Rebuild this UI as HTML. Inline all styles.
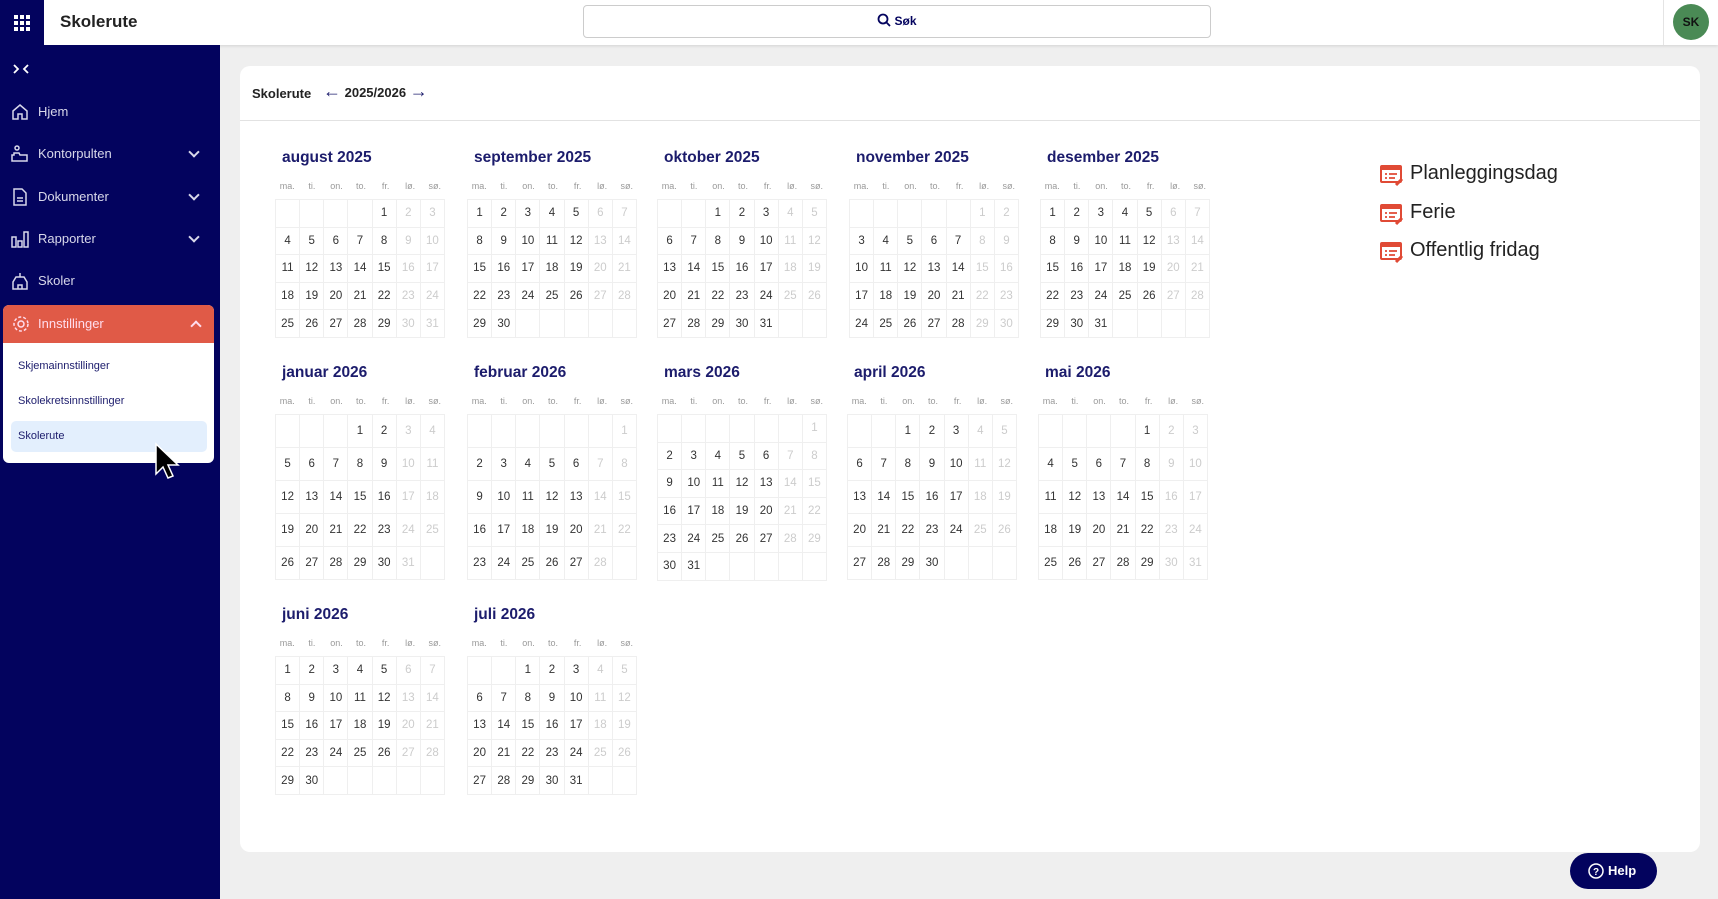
<!DOCTYPE html>
<html><head><meta charset="utf-8"><style>
*{box-sizing:border-box;margin:0;padding:0}
body{width:1718px;height:899px;overflow:hidden;background:#efefef;font-family:"Liberation Sans",sans-serif;position:relative}
.top{position:absolute;left:0;top:0;width:1718px;height:45px;background:#fff;box-shadow:0 1px 3px rgba(0,0,0,.12)}
.sq{position:absolute;left:0;top:0;width:44px;height:45px;background:#03035e}
.side{position:absolute;left:0;top:45px;width:220px;height:854px;background:#03035e;color:#d8d8ea}
.title{position:absolute;left:60px;top:12px;font-size:17px;font-weight:bold;color:#222}
.search{position:absolute;left:583px;top:5px;width:628px;height:33px;border:1px solid #ccc;border-radius:4px;text-align:center;font-size:12px;font-weight:bold;line-height:31px;color:#03035e}
.av{position:absolute;left:1673px;top:4px;width:36px;height:36px;border-radius:50%;background:#4a8a55;color:#111;font-size:12px;font-weight:bold;text-align:center;line-height:36px}
.sep{position:absolute;left:1663px;top:0;width:1px;height:45px;background:#e4e4e4}
.it{position:absolute;left:0;width:220px;height:40px;font-size:13px;line-height:40px;padding-left:38px}
.it svg{position:absolute;left:11px;top:11px}
.chev{position:absolute;left:190px;top:14px;width:8px;height:8px;border-right:2px solid #d8d8ea;border-bottom:2px solid #d8d8ea;transform:rotate(45deg)}
.card{position:absolute;left:240px;top:66px;width:1460px;height:786px;background:#fff;border-radius:10px}
.hdr{position:absolute;left:0;top:0;width:1460px;height:55px;border-bottom:1px solid #e2e2e2}
.mo{position:absolute;width:172px}
.mo h3{font-size:15.5px;color:#1c1c6c;font-weight:bold;margin-left:7px;height:33px;line-height:20px}
.mo .wd{display:flex;font-size:9px;color:#999;height:12px}
.mo .wd span{flex:1;text-align:center}
.mo table{border-collapse:collapse;width:170px;margin-top:6px}
.mo td{border:1px solid #efefef;width:24.3px;text-align:center;font-size:11.5px;color:#333}
.mo td:nth-child(n+6){color:#ccc}
.r1 td{height:27.6px}.r2 td{height:33px}.r2.six td{height:27.6px}
.lg{position:absolute;left:1380px;font-size:20px;color:#222}
.lg svg{position:absolute;left:0;top:3px}
.lg span{position:absolute;left:30px;white-space:nowrap}
.help{position:absolute;left:1570px;top:853px;width:87px;height:36px;border-radius:18px;background:#03035e;color:#fff;font-size:13px;font-weight:bold;line-height:36px;padding-left:38px}
</style></head><body>
<div class="top">
<div class="sq"><svg width="44" height="45" viewBox="0 0 44 45" fill="#fff"><rect x="14" y="15" width="4" height="4"/><rect x="20" y="15" width="4" height="4"/><rect x="26" y="15" width="4" height="4"/><rect x="14" y="21" width="4" height="4"/><rect x="20" y="21" width="4" height="4"/><rect x="26" y="21" width="4" height="4"/><rect x="14" y="27" width="4" height="4"/><rect x="20" y="27" width="4" height="4"/><rect x="26" y="27" width="4" height="4"/></svg></div>
<div class="title">Skolerute</div>
<div class="search"><svg width="14" height="14" viewBox="0 0 14 14" style="vertical-align:-2px;margin-right:3px"><circle cx="6" cy="6" r="4.5" stroke="#03035e" stroke-width="1.8" fill="none"/><path d="M9.3 9.3L13 13" stroke="#03035e" stroke-width="1.8"/></svg>Søk</div>
<div class="sep"></div>
<div class="av">SK</div>
</div>
<div class="side">
<svg style="position:absolute;left:13px;top:19px" width="16" height="10" viewBox="0 0 16 10" fill="none" stroke="#fff" stroke-width="1.8"><path d="M1 1l4 4-4 4M15 1l-4 4 4 4"/></svg>
<div class="it" style="top:47px"><svg width="18" height="18" viewBox="0 0 18 18" fill="none" stroke="#d8d8ea" stroke-width="1.5"><path d="M2 8L9 2l7 6v8H11v-5H7v5H2z"/></svg>Hjem</div>
<div class="it" style="top:89px"><svg width="18" height="18" viewBox="0 0 18 18" fill="none" stroke="#d8d8ea" stroke-width="1.5"><circle cx="6" cy="3" r="2"/><path d="M3 8h5l1 2h7v6H1v-6h2z"/></svg>Kontorpulten<div class="chev"></div></div>
<div class="it" style="top:132px"><svg width="18" height="18" viewBox="0 0 18 18" fill="none" stroke="#d8d8ea" stroke-width="1.5"><path d="M3 1h8l4 4v12H3z M6 10h6M6 13h6"/></svg>Dokumenter<div class="chev"></div></div>
<div class="it" style="top:174px"><svg width="18" height="18" viewBox="0 0 18 18" fill="none" stroke="#d8d8ea" stroke-width="1.5"><path d="M1 7h4v10H1zM7 11h4v6H7zM13 2h4v15h-4z"/></svg>Rapporter<div class="chev"></div></div>
<div class="it" style="top:216px"><svg width="18" height="18" viewBox="0 0 18 18" fill="none" stroke="#d8d8ea" stroke-width="1.5"><path d="M9 1v4M5 5h8l3 5v7H2v-7z M7 17v-4h4v4"/></svg>Skoler</div>
<div style="position:absolute;left:3px;top:260px;width:211px;height:158px;background:#fff;border-radius:6px"></div>
<div class="it" style="top:260px;left:3px;width:211px;height:38px;line-height:38px;background:#e05a47;border-radius:6px 6px 0 0;padding-left:35px;color:#fde"><svg width="18" height="18" viewBox="0 0 18 18" fill="none" stroke="#fde" stroke-width="1.5" style="left:9px;top:10px"><circle cx="9" cy="9" r="3"/><circle cx="9" cy="9" r="7" stroke-dasharray="3 2"/></svg>Innstillinger<div class="chev" style="left:189px;top:17px;transform:rotate(225deg);border-color:#fde"></div></div>
<div style="position:absolute;left:18px;top:315px;font-size:11px;color:#1c1c6c">Skjemainnstillinger</div>
<div style="position:absolute;left:18px;top:350px;font-size:11px;color:#1c1c6c">Skolekretsinnstillinger</div>
<div style="position:absolute;left:11px;top:376px;width:196px;height:31px;background:#e3effd;border-radius:5px;font-size:11px;color:#1c1c6c;padding-left:7px;line-height:31px">Skolerute</div>
<svg style="position:absolute;left:154px;top:397px" width="26" height="40" viewBox="0 0 26 40"><path d="M2 2v30l7-7 5 11 5-2-5-11h10z" fill="#000" stroke="#fff" stroke-width="1.5"/></svg>
</div>
<div class="card">
<div class="hdr"><div style="position:absolute;left:12px;top:20px;font-size:13px;font-weight:bold;color:#222">Skolerute</div>
<div style="position:absolute;left:83px;top:15px;font-size:13px;font-weight:bold;color:#222"><span style="color:#1c1c6c;font-size:18px">←</span> 2025/2026 <span style="color:#1c1c6c;font-size:18px">→</span></div></div>
</div>

<div class="mo" style="left:275px;top:148px"><h3>august 2025</h3><div class="wd"><span>ma.</span><span>ti.</span><span>on.</span><span>to.</span><span>fr.</span><span>lø.</span><span>sø.</span></div><table>
<tr class="r1"><td></td><td></td><td></td><td></td><td>1</td><td>2</td><td>3</td></tr>
<tr class="r1"><td>4</td><td>5</td><td>6</td><td>7</td><td>8</td><td>9</td><td>10</td></tr>
<tr class="r1"><td>11</td><td>12</td><td>13</td><td>14</td><td>15</td><td>16</td><td>17</td></tr>
<tr class="r1"><td>18</td><td>19</td><td>20</td><td>21</td><td>22</td><td>23</td><td>24</td></tr>
<tr class="r1"><td>25</td><td>26</td><td>27</td><td>28</td><td>29</td><td>30</td><td>31</td></tr></table></div>

<div class="mo" style="left:467px;top:148px"><h3>september 2025</h3><div class="wd"><span>ma.</span><span>ti.</span><span>on.</span><span>to.</span><span>fr.</span><span>lø.</span><span>sø.</span></div><table>
<tr class="r1"><td>1</td><td>2</td><td>3</td><td>4</td><td>5</td><td>6</td><td>7</td></tr>
<tr class="r1"><td>8</td><td>9</td><td>10</td><td>11</td><td>12</td><td>13</td><td>14</td></tr>
<tr class="r1"><td>15</td><td>16</td><td>17</td><td>18</td><td>19</td><td>20</td><td>21</td></tr>
<tr class="r1"><td>22</td><td>23</td><td>24</td><td>25</td><td>26</td><td>27</td><td>28</td></tr>
<tr class="r1"><td>29</td><td>30</td><td></td><td></td><td></td><td></td><td></td></tr></table></div>

<div class="mo" style="left:657px;top:148px"><h3>oktober 2025</h3><div class="wd"><span>ma.</span><span>ti.</span><span>on.</span><span>to.</span><span>fr.</span><span>lø.</span><span>sø.</span></div><table>
<tr class="r1"><td></td><td></td><td>1</td><td>2</td><td>3</td><td>4</td><td>5</td></tr>
<tr class="r1"><td>6</td><td>7</td><td>8</td><td>9</td><td>10</td><td>11</td><td>12</td></tr>
<tr class="r1"><td>13</td><td>14</td><td>15</td><td>16</td><td>17</td><td>18</td><td>19</td></tr>
<tr class="r1"><td>20</td><td>21</td><td>22</td><td>23</td><td>24</td><td>25</td><td>26</td></tr>
<tr class="r1"><td>27</td><td>28</td><td>29</td><td>30</td><td>31</td><td></td><td></td></tr></table></div>

<div class="mo" style="left:849px;top:148px"><h3>november 2025</h3><div class="wd"><span>ma.</span><span>ti.</span><span>on.</span><span>to.</span><span>fr.</span><span>lø.</span><span>sø.</span></div><table>
<tr class="r1"><td></td><td></td><td></td><td></td><td></td><td>1</td><td>2</td></tr>
<tr class="r1"><td>3</td><td>4</td><td>5</td><td>6</td><td>7</td><td>8</td><td>9</td></tr>
<tr class="r1"><td>10</td><td>11</td><td>12</td><td>13</td><td>14</td><td>15</td><td>16</td></tr>
<tr class="r1"><td>17</td><td>18</td><td>19</td><td>20</td><td>21</td><td>22</td><td>23</td></tr>
<tr class="r1"><td>24</td><td>25</td><td>26</td><td>27</td><td>28</td><td>29</td><td>30</td></tr></table></div>

<div class="mo" style="left:1040px;top:148px"><h3>desember 2025</h3><div class="wd"><span>ma.</span><span>ti.</span><span>on.</span><span>to.</span><span>fr.</span><span>lø.</span><span>sø.</span></div><table>
<tr class="r1"><td>1</td><td>2</td><td>3</td><td>4</td><td>5</td><td>6</td><td>7</td></tr>
<tr class="r1"><td>8</td><td>9</td><td>10</td><td>11</td><td>12</td><td>13</td><td>14</td></tr>
<tr class="r1"><td>15</td><td>16</td><td>17</td><td>18</td><td>19</td><td>20</td><td>21</td></tr>
<tr class="r1"><td>22</td><td>23</td><td>24</td><td>25</td><td>26</td><td>27</td><td>28</td></tr>
<tr class="r1"><td>29</td><td>30</td><td>31</td><td></td><td></td><td></td><td></td></tr></table></div>

<div class="mo" style="left:275px;top:363px"><h3>januar 2026</h3><div class="wd"><span>ma.</span><span>ti.</span><span>on.</span><span>to.</span><span>fr.</span><span>lø.</span><span>sø.</span></div><table>
<tr class="r2"><td></td><td></td><td></td><td>1</td><td>2</td><td>3</td><td>4</td></tr>
<tr class="r2"><td>5</td><td>6</td><td>7</td><td>8</td><td>9</td><td>10</td><td>11</td></tr>
<tr class="r2"><td>12</td><td>13</td><td>14</td><td>15</td><td>16</td><td>17</td><td>18</td></tr>
<tr class="r2"><td>19</td><td>20</td><td>21</td><td>22</td><td>23</td><td>24</td><td>25</td></tr>
<tr class="r2"><td>26</td><td>27</td><td>28</td><td>29</td><td>30</td><td>31</td><td></td></tr></table></div>

<div class="mo" style="left:467px;top:363px"><h3>februar 2026</h3><div class="wd"><span>ma.</span><span>ti.</span><span>on.</span><span>to.</span><span>fr.</span><span>lø.</span><span>sø.</span></div><table>
<tr class="r2"><td></td><td></td><td></td><td></td><td></td><td></td><td>1</td></tr>
<tr class="r2"><td>2</td><td>3</td><td>4</td><td>5</td><td>6</td><td>7</td><td>8</td></tr>
<tr class="r2"><td>9</td><td>10</td><td>11</td><td>12</td><td>13</td><td>14</td><td>15</td></tr>
<tr class="r2"><td>16</td><td>17</td><td>18</td><td>19</td><td>20</td><td>21</td><td>22</td></tr>
<tr class="r2"><td>23</td><td>24</td><td>25</td><td>26</td><td>27</td><td>28</td><td></td></tr></table></div>

<div class="mo" style="left:657px;top:363px"><h3>mars 2026</h3><div class="wd"><span>ma.</span><span>ti.</span><span>on.</span><span>to.</span><span>fr.</span><span>lø.</span><span>sø.</span></div><table>
<tr class="r2 six"><td></td><td></td><td></td><td></td><td></td><td></td><td>1</td></tr>
<tr class="r2 six"><td>2</td><td>3</td><td>4</td><td>5</td><td>6</td><td>7</td><td>8</td></tr>
<tr class="r2 six"><td>9</td><td>10</td><td>11</td><td>12</td><td>13</td><td>14</td><td>15</td></tr>
<tr class="r2 six"><td>16</td><td>17</td><td>18</td><td>19</td><td>20</td><td>21</td><td>22</td></tr>
<tr class="r2 six"><td>23</td><td>24</td><td>25</td><td>26</td><td>27</td><td>28</td><td>29</td></tr>
<tr class="r2 six"><td>30</td><td>31</td><td></td><td></td><td></td><td></td><td></td></tr></table></div>

<div class="mo" style="left:847px;top:363px"><h3>april 2026</h3><div class="wd"><span>ma.</span><span>ti.</span><span>on.</span><span>to.</span><span>fr.</span><span>lø.</span><span>sø.</span></div><table>
<tr class="r2"><td></td><td></td><td>1</td><td>2</td><td>3</td><td>4</td><td>5</td></tr>
<tr class="r2"><td>6</td><td>7</td><td>8</td><td>9</td><td>10</td><td>11</td><td>12</td></tr>
<tr class="r2"><td>13</td><td>14</td><td>15</td><td>16</td><td>17</td><td>18</td><td>19</td></tr>
<tr class="r2"><td>20</td><td>21</td><td>22</td><td>23</td><td>24</td><td>25</td><td>26</td></tr>
<tr class="r2"><td>27</td><td>28</td><td>29</td><td>30</td><td></td><td></td><td></td></tr></table></div>

<div class="mo" style="left:1038px;top:363px"><h3>mai 2026</h3><div class="wd"><span>ma.</span><span>ti.</span><span>on.</span><span>to.</span><span>fr.</span><span>lø.</span><span>sø.</span></div><table>
<tr class="r2"><td></td><td></td><td></td><td></td><td>1</td><td>2</td><td>3</td></tr>
<tr class="r2"><td>4</td><td>5</td><td>6</td><td>7</td><td>8</td><td>9</td><td>10</td></tr>
<tr class="r2"><td>11</td><td>12</td><td>13</td><td>14</td><td>15</td><td>16</td><td>17</td></tr>
<tr class="r2"><td>18</td><td>19</td><td>20</td><td>21</td><td>22</td><td>23</td><td>24</td></tr>
<tr class="r2"><td>25</td><td>26</td><td>27</td><td>28</td><td>29</td><td>30</td><td>31</td></tr></table></div>

<div class="mo" style="left:275px;top:605px"><h3>juni 2026</h3><div class="wd"><span>ma.</span><span>ti.</span><span>on.</span><span>to.</span><span>fr.</span><span>lø.</span><span>sø.</span></div><table>
<tr class="r1"><td>1</td><td>2</td><td>3</td><td>4</td><td>5</td><td>6</td><td>7</td></tr>
<tr class="r1"><td>8</td><td>9</td><td>10</td><td>11</td><td>12</td><td>13</td><td>14</td></tr>
<tr class="r1"><td>15</td><td>16</td><td>17</td><td>18</td><td>19</td><td>20</td><td>21</td></tr>
<tr class="r1"><td>22</td><td>23</td><td>24</td><td>25</td><td>26</td><td>27</td><td>28</td></tr>
<tr class="r1"><td>29</td><td>30</td><td></td><td></td><td></td><td></td><td></td></tr></table></div>

<div class="mo" style="left:467px;top:605px"><h3>juli 2026</h3><div class="wd"><span>ma.</span><span>ti.</span><span>on.</span><span>to.</span><span>fr.</span><span>lø.</span><span>sø.</span></div><table>
<tr class="r1"><td></td><td></td><td>1</td><td>2</td><td>3</td><td>4</td><td>5</td></tr>
<tr class="r1"><td>6</td><td>7</td><td>8</td><td>9</td><td>10</td><td>11</td><td>12</td></tr>
<tr class="r1"><td>13</td><td>14</td><td>15</td><td>16</td><td>17</td><td>18</td><td>19</td></tr>
<tr class="r1"><td>20</td><td>21</td><td>22</td><td>23</td><td>24</td><td>25</td><td>26</td></tr>
<tr class="r1"><td>27</td><td>28</td><td>29</td><td>30</td><td>31</td><td></td><td></td></tr></table></div>

<div class="lg" style="top:162px"><svg width="24" height="22" viewBox="0 0 24 22"><rect x="1" y="1" width="20" height="16" rx="1" fill="none" stroke="#e04a35" stroke-width="2"/><rect x="1" y="1" width="20" height="4" fill="#e04a35"/><path d="M5 9h2M9 9h8M5 13h2M9 13h6" stroke="#e04a35" stroke-width="1.8"/><path d="M16 20l6-6" stroke="#e04a35" stroke-width="3"/></svg><span>Planleggingsdag</span></div>
<div class="lg" style="top:201px"><svg width="24" height="22" viewBox="0 0 24 22"><rect x="1" y="1" width="20" height="16" rx="1" fill="none" stroke="#e04a35" stroke-width="2"/><rect x="1" y="1" width="20" height="4" fill="#e04a35"/><path d="M5 9h2M9 9h8M5 13h2M9 13h6" stroke="#e04a35" stroke-width="1.8"/><path d="M16 20l6-6" stroke="#e04a35" stroke-width="3"/></svg><span>Ferie</span></div>
<div class="lg" style="top:239px"><svg width="24" height="22" viewBox="0 0 24 22"><rect x="1" y="1" width="20" height="16" rx="1" fill="none" stroke="#e04a35" stroke-width="2"/><rect x="1" y="1" width="20" height="4" fill="#e04a35"/><path d="M5 9h2M9 9h8M5 13h2M9 13h6" stroke="#e04a35" stroke-width="1.8"/><path d="M16 20l6-6" stroke="#e04a35" stroke-width="3"/></svg><span>Offentlig fridag</span></div>

<div class="help"><svg style="position:absolute;left:18px;top:10px" width="16" height="16" viewBox="0 0 16 16"><circle cx="8" cy="8" r="7" fill="none" stroke="#fff" stroke-width="1.5"/><text x="8" y="12" font-size="10" font-weight="bold" fill="#fff" text-anchor="middle" font-family="Liberation Sans">?</text></svg>Help</div>
</body></html>
